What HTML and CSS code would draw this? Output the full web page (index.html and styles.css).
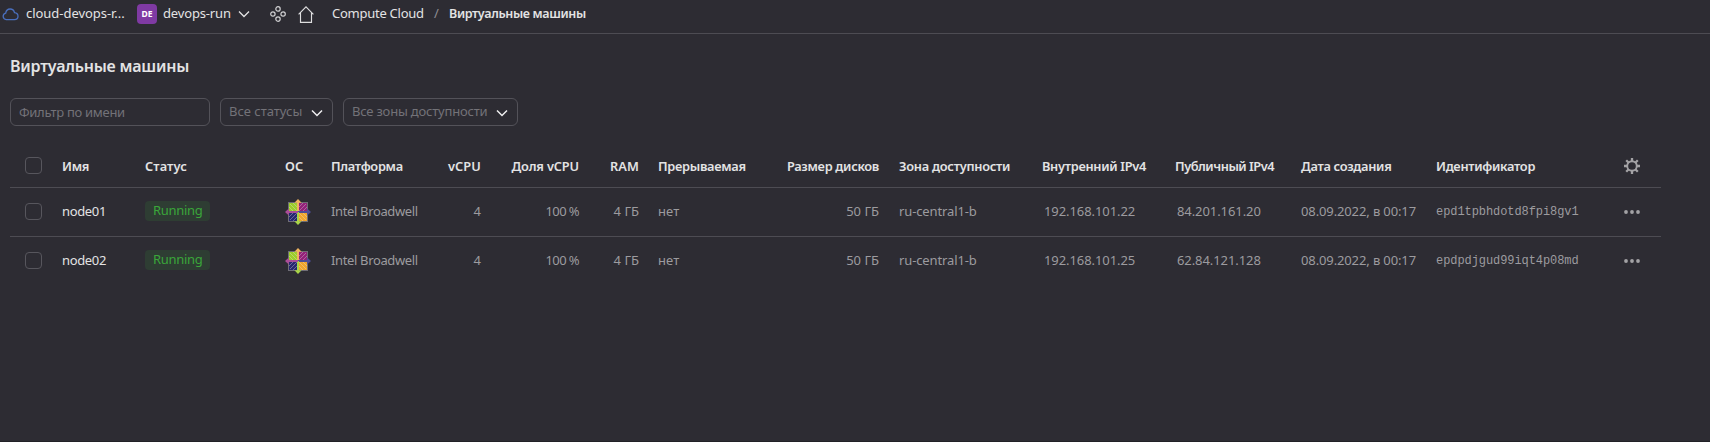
FILE: index.html
```html
<!DOCTYPE html>
<html lang="ru">
<head>
<meta charset="utf-8">
<title>Виртуальные машины</title>
<link rel="stylesheet" href="styles.css">
</head>
<body>
<svg class="defs" width="0" height="0">
  <symbol id="chevron" viewBox="0 0 12 8"><path d="M1 1.5 6 6.5 11 1.5" fill="none" stroke="currentColor"/></symbol>
  <symbol id="dots" viewBox="0 0 16 4"><g fill="#a3a2a5"><circle cx="2" cy="2" r="1.9"/><circle cx="8" cy="2" r="1.9"/><circle cx="14" cy="2" r="1.9"/></g></symbol>
  <symbol id="centos" viewBox="0 0 26 26">
    <rect x="3" y="3" width="20" height="20" fill="#6f6d76"/>
    <rect x="4" y="4" width="18" height="18" fill="#bdb9c4"/>
    <rect x="4" y="4" width="8" height="8" fill="#9ccd2a"/>
    <rect x="14" y="4" width="8" height="8" fill="#932279"/>
    <rect x="4" y="14" width="8" height="8" fill="#28286f"/>
    <rect x="14" y="14" width="8" height="8" fill="#f0a52c"/>
    <path d="M5 5 21 21M21 5 5 21M8 4 13 9 18 4M8 22 13 17 18 22M4 8 9 13 4 18M22 8 17 13 22 18" fill="none" stroke="#e8e4ea" stroke-width=".7" opacity=".5"/>
    <path d="M13 0 16.6 3.8H14V13H12V3.8H9.4Z" fill="#f0b45e"/>
    <path d="M26 13 22.2 16.6V14H13V12H22.2V9.4Z" fill="#4d4c94"/>
    <path d="M13 26 9.4 22.2H12V13H14V22.2H16.6Z" fill="#a9d548"/>
    <path d="M0 13 3.8 9.4V12H13V14H3.8V16.6Z" fill="#a94c98"/>
  </symbol>
</svg>
<header class="topbar">
  <svg class="cloud" width="17" height="13" viewBox="0 0 17 13"><path d="M4.2 11.6A3.3 3.3 0 0 1 3.7 5.1C4.1 2.7 5.9 1 8.1 1c2.3 0 3.9 1.4 4.4 3.6 2.1.3 3.5 1.7 3.5 3.6 0 2-1.5 3.4-3.6 3.4Z" fill="none" stroke="#4a6fbd" stroke-width="1.3"/></svg>
  <span class="cloud-name">cloud-devops-r...</span>
  <span class="badge">DE</span>
  <span class="folder-name">devops-run</span>
  <svg class="folder-chevron" width="12" height="8"><use href="#chevron"/></svg>
  <svg class="services" width="16" height="16" viewBox="0 0 16 16"><g fill="none" stroke="#d0d0d2" stroke-width="1.2"><circle cx="8" cy="2.9" r="2.2"/><circle cx="2.9" cy="8" r="2.2"/><circle cx="13.1" cy="8" r="2.2"/><circle cx="8" cy="13.1" r="2.2"/></g></svg>
  <svg class="home" width="16" height="17" viewBox="0 0 16 17"><path d="M.6 8.3 8 .9 15.4 8.3M2.5 6.6V16.3H13.5V6.6" fill="none" stroke="#dededf" stroke-width="1.15"/></svg>
  <span class="crumb">Compute Cloud</span>
  <span class="slash">/</span>
  <span class="crumb-current">Виртуальные машины</span>
</header>
<main>
  <h1>Виртуальные машины</h1>
  <div class="filters">
    <input class="name-filter" type="text" placeholder="Фильтр по имени">
    <button class="select statuses"><span>Все статусы</span><svg width="12" height="8"><use href="#chevron"/></svg></button>
    <button class="select zones"><span>Все зоны доступности</span><svg width="12" height="8"><use href="#chevron"/></svg></button>
  </div>
  <section class="table">
    <div class="row head">
      <i class="check"></i><span>Имя</span><span class="wide">Статус</span><span class="wide">ОС</span><span>Платформа</span><span class="num wide">vCPU</span><span class="num share">Доля vCPU</span><span class="num wide">RAM</span><span class="preempt">Прерываемая</span><span class="num">Размер дисков</span><span class="zone">Зона доступности</span><span>Внутренний IPv4</span><span class="public">Публичный IPv4</span><span>Дата создания</span><span>Идентификатор</span>
      <svg class="gear" width="16" height="16" viewBox="0 0 16 16"><circle cx="8" cy="8" r="4.8" fill="none" stroke="#a3a2a5" stroke-width="1.9"/><path d="M8 0V3.5M8 12.5V16M0 8H3.5M12.5 8H16M2.2 2.2 4.7 4.7M11.3 11.3 13.8 13.8M2.2 13.8 4.7 11.3M11.3 4.7 13.8 2.2" stroke="#a3a2a5" stroke-width="2.3"/></svg>
    </div>
    <div class="row">
      <i class="check"></i><span class="name">node01</span><span class="state"><b>Running</b></span><svg class="os" width="26" height="26"><use href="#centos"/></svg><span class="platform">Intel Broadwell</span><span class="num">4</span><span class="num percent">100 %</span><span class="num">4 ГБ</span><span class="preempt no">нет</span><span class="num">50 ГБ</span><span class="zone">ru-central1-b</span><span class="ip">192.168.101.22</span><span class="ip">84.201.161.20</span><span class="date">08.09.2022, в 00:17</span><span class="id">epd1tpbhdotd8fpi8gv1</span><svg class="more" width="16" height="4"><use href="#dots"/></svg>
    </div>
    <div class="row">
      <i class="check"></i><span class="name">node02</span><span class="state"><b>Running</b></span><svg class="os" width="26" height="26"><use href="#centos"/></svg><span class="platform">Intel Broadwell</span><span class="num">4</span><span class="num percent">100 %</span><span class="num">4 ГБ</span><span class="preempt no">нет</span><span class="num">50 ГБ</span><span class="zone">ru-central1-b</span><span class="ip">192.168.101.25</span><span class="ip">62.84.121.128</span><span class="date">08.09.2022, в 00:17</span><span class="id">epdpdjgud99iqt4p08md</span><svg class="more" width="16" height="4"><use href="#dots"/></svg>
    </div>
  </section>
</main>
</body>
</html>
```
FILE: styles.css
```css
* { box-sizing: border-box; }
html { height: 100%; overflow: hidden; }
body {
  margin: 0;
  height: 442px;
  overflow: hidden;
  background: #2d2c33;
  border-bottom: 1px solid #222127;
  color: #e3e3e4;
  font: 13px/18px "Noto Sans", sans-serif;
  white-space: nowrap;
}
svg { display: block; flex: none; }
.defs { position: absolute; }

.topbar {
  display: flex;
  align-items: center;
  height: 34px;
  padding: 0 0 7px 2px;
  border-bottom: 1px solid #4d4c53;
}
.cloud { margin-top: 2px; }
.cloud-name { width: 111px; margin-left: 7px; letter-spacing: -.04px; }
.badge {
  width: 20px;
  height: 20px;
  margin-top: 1px;
  border-radius: 4px;
  background: #7f3aa3;
  color: #fff;
  font-size: 8.5px;
  font-weight: 700;
  line-height: 20px;
  text-align: center;
}
.folder-name { width: 76px; margin-left: 6px; letter-spacing: -.16px; }
.folder-chevron { margin: 2px 0 0 -1px; stroke-width: 1.3; }
.services { margin: 2px 0 0 20px; }
.home { margin: 2px 0 0 12px; }
.crumb { width: 101px; margin-left: 18px; letter-spacing: -.26px; }
.slash { width: 15px; margin-left: 1px; color: #8f8e93; }
.crumb-current { padding-top: 1px; font-weight: 600; font-size: 12.5px; letter-spacing: -.34px; }

main { padding: 20px 0 0 10px; }
h1 { margin: 0; font-size: 16px; line-height: 24px; font-weight: 600; letter-spacing: -.22px; }
.filters { display: flex; gap: 10px; margin-top: 20px; }
.name-filter, .select {
  height: 28px;
  border: 1px solid #535259;
  border-radius: 6px;
  background: transparent;
  color: #737278;
  font: inherit;
}
.name-filter { width: 200px; padding: 0 8px 1px; letter-spacing: -.29px; outline: 0; }
.name-filter::placeholder { color: #737278; opacity: 1; }
.select { display: flex; justify-content: space-between; align-items: center; padding: 0 9px 3px 8px; }
.select svg { margin-top: 4px; color: #efeff0; stroke-width: 1.5; }
.statuses { width: 113px; }
.zones { width: 175px; letter-spacing: -.2px; }

.table { width: 1651px; margin-top: 13px; }
.row {
  display: grid;
  grid-template-columns: 52px 83px 140px 46px 90px 60px 98px 60px 120px 120px 163px 134px 125px 135px 188px 37px;
  align-items: center;
  height: 49px;
  padding-bottom: 3px;
  border-bottom: 1px solid #4d4c53;
  color: #9c9b9f;
}
.row:last-child { border-bottom-color: transparent; }
.head { height: 49px; padding: 6px 0 0; color: #e3e3e4; font-size: 12.8px; font-weight: 600; letter-spacing: -.3px; }
.wide { letter-spacing: .1px; }
.share { letter-spacing: -.15px; }
.num { text-align: right; }
.check { width: 17px; height: 17px; margin: 1px 0 0 15px; border: 1px solid #57565d; border-radius: 4px; }
.head .check { margin-top: -1px; }
.name { color: #e3e3e4; letter-spacing: -.35px; }
.state b {
  display: block;
  width: 65px;
  height: 20px;
  margin-top: 1px;
  padding-left: 8px;
  border-radius: 4px;
  background: #2e3d33;
  color: #3aa63a;
  font-weight: 400;
  line-height: 19px;
  letter-spacing: -.3px;
}
.platform { letter-spacing: -.36px; }
.percent { letter-spacing: -.6px; }
.preempt { padding-left: 19px; }
.no { letter-spacing: .1px; }
.zone { padding-left: 20px; letter-spacing: -.12px; }
.head .zone { letter-spacing: -.25px; }
.public { margin-left: -1px; letter-spacing: -.48px; }
.ip { padding-left: 2px; letter-spacing: -.08px; }
.ip + .ip { padding-left: 1px; }
.date { letter-spacing: -.12px; }
.id { padding-top: 3px; font-family: "Liberation Mono", monospace; font-size: 12px; letter-spacing: -.07px; }
.more { margin-top: 2px; }
.os { margin-top: 2px; }
```
